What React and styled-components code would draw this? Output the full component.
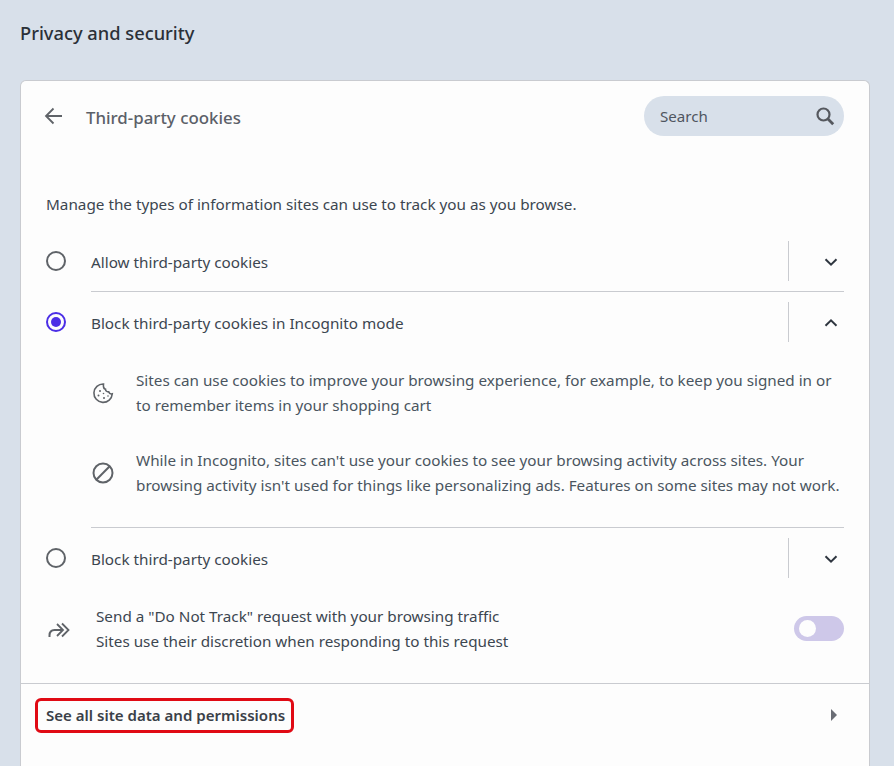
import React from 'react'
import styled, { createGlobalStyle } from 'styled-components'

const Global = createGlobalStyle`
  html, body {
    margin: 0;
    height: 766px;
    overflow: hidden;
    background: #d8e0ea;
    font-family: "Noto Sans", "Open Sans", sans-serif;
  }
`

const Page = styled.div`
  padding: 0 24px 0 20px;
`

const PageTitle = styled.h1`
  margin: 0;
  height: 80px;
  padding-top: 21px;
  box-sizing: border-box;
  font-size: 18.3px;
  line-height: 24px;
  font-weight: 500;
  color: #2b3038;
`

const Card = styled.section`
  background: #fdfdfd;
  border: 1px solid #c9cbd0;
  border-bottom: 0;
  border-radius: 6px 6px 0 0;
  height: 700px;
`

const Header = styled.header`
  display: flex;
  align-items: center;
  height: 40px;
  padding: 15px 25px 0 23px;
`

const BackIcon = styled.svg`
  width: 20px;
  height: 20px;
  margin-right: 22px;
  color: #5f6368;
`

const HeaderTitle = styled.h2`
  flex: 1;
  margin: 0;
  padding-top: 2px;
  font-size: 16.85px;
  font-weight: 500;
  color: #5b6068;
`

const SearchBox = styled.div`
  display: flex;
  align-items: center;
  justify-content: space-between;
  width: 200px;
  height: 40px;
  box-sizing: border-box;
  padding: 0 9px 0 16px;
  border-radius: 20px;
  background: #d8e0ea;
  font-size: 15.1px;
  color: #4f5660;
`

const Intro = styled.p`
  margin: 0;
  padding: 58px 0 0 25px;
  height: 20px;
  line-height: 20px;
  font-size: 15.28px;
  color: #3c4650;
`

const Options = styled.div`
  margin-top: 17px;
  padding: 0 25px;
`

const OptionRow = styled.div`
  display: flex;
  align-items: center;
  height: 60px;
`

const Radio = styled.span`
  flex: none;
  width: 20px;
  height: 20px;
  box-sizing: border-box;
  margin-right: 25px;
  border-radius: 50%;
  border: 2px solid ${p => (p.$checked ? '#4b2ee6' : '#5f6368')};
  display: flex;
  align-items: center;
  justify-content: center;
  &::after {
    content: '';
    display: ${p => (p.$checked ? 'block' : 'none')};
    width: 10px;
    height: 10px;
    border-radius: 50%;
    background: #4b2ee6;
  }
`

const OptionLabel = styled.span`
  flex: 1;
  padding-top: 2px;
  font-size: 15.28px;
  color: #3c4650;
`

const ExpandCell = styled.div`
  width: 56px;
  height: 40px;
  border-left: 1px solid #c9cbd0;
  display: flex;
  align-items: center;
  justify-content: flex-end;
  padding-right: 5px;
  box-sizing: border-box;
`

const Chevron = styled.svg`
  width: 16px;
  height: 16px;
  margin-top: 2px;
  color: #2f3640;
  transform: ${p => (p.$up ? 'rotate(180deg)' : 'none')};
`

const Rule = styled.div`
  height: 1px;
  margin-left: 45px;
  background: #c9cbd0;
`

const Details = styled.div`
  margin-left: 45px;
  padding-top: 16px;
  height: 175px;
  box-sizing: border-box;
`

const DetailRow = styled.div`
  display: flex;
  align-items: center;
  margin-bottom: 30px;
`

const DetailIcon = styled.svg`
  flex: none;
  width: 24px;
  height: 24px;
  margin-right: 21px;
  color: #5f6368;
`

const DetailText = styled.p`
  margin: 0;
  font-size: 15.25px;
  line-height: 25px;
  color: #4a5560;
  white-space: nowrap;
`

const TrackRow = styled.div`
  display: flex;
  align-items: center;
  height: 81px;
  padding: 0 25px 14px 25px;
  border-bottom: 1px solid #c9cbd0;
`

const TrackIcon = styled.svg`
  flex: none;
  width: 24px;
  height: 24px;
  margin-right: 26px;
  color: #5f6368;
`

const TrackText = styled.div`
  flex: 1;
  font-size: 15.25px;
  line-height: 25px;
  color: #3c4650;
`

const Toggle = styled.div`
  display: flex;
  align-items: center;
  width: 50px;
  height: 25px;
  box-sizing: border-box;
  padding-left: 5px;
  border-radius: 13px;
  background: #cec8e9;
  &::before {
    content: '';
    width: 17px;
    height: 17px;
    border-radius: 50%;
    background: #fdfdfd;
  }
`

const LinkRow = styled.div`
  display: flex;
  align-items: flex-start;
  justify-content: space-between;
  padding: 14px 32px 0 14px;
`

const HighlightLink = styled.a`
  display: block;
  width: 259px;
  height: 35px;
  box-sizing: border-box;
  padding-left: 8px;
  border: 3px solid #e00a14;
  border-radius: 6px;
  font-size: 15.05px;
  line-height: 29px;
  font-weight: 600;
  color: #3a4048;
  white-space: nowrap;
`

const Caret = styled.svg`
  width: 6px;
  height: 12px;
  margin-top: 11px;
  color: #6a6d75;
`

const ChevronDown = ({ up }) => (
  <Chevron $up={up} viewBox="0 0 16 16" fill="none" stroke="currentColor" strokeWidth="2">
    <path d="M2.5 5.2 8 10.6l5.5-5.4" />
  </Chevron>
)

export default function App() {
  return (
    <Page>
      <Global />
      <PageTitle>Privacy and security</PageTitle>
      <Card>
        <Header>
          <BackIcon viewBox="0 0 20 20" fill="none" stroke="currentColor" strokeWidth="1.8">
            <path d="M18 10H2.500M9.500 2.500 2 10l7.500 7.500" />
          </BackIcon>
          <HeaderTitle>Third-party cookies</HeaderTitle>
          <SearchBox>
            Search
            <svg width="20" height="20" viewBox="0 0 20 20" fill="none" stroke="#55585e" strokeWidth="2.2">
              <circle cx="8.500" cy="8.500" r="6" />
              <path d="m13 13 5.200 5.200" strokeWidth="2.800" />
            </svg>
          </SearchBox>
        </Header>
        <Intro>Manage the types of information sites can use to track you as you browse.</Intro>
        <Options>
          <OptionRow>
            <Radio />
            <OptionLabel>Allow third-party cookies</OptionLabel>
            <ExpandCell><ChevronDown /></ExpandCell>
          </OptionRow>
          <Rule />
          <OptionRow>
            <Radio $checked />
            <OptionLabel>Block third-party cookies in Incognito mode</OptionLabel>
            <ExpandCell><ChevronDown up /></ExpandCell>
          </OptionRow>
          <Details>
            <DetailRow>
              <DetailIcon viewBox="0 0 24 24" fill="none" stroke="currentColor" strokeWidth="1.6">
                <path d="M12.500 3a9.200 9.200 0 1 0 8.800 9.800c-1.600.4-3.100-.4-3.600-2-1.700.3-3.200-.9-3.200-2.600-1.600-.4-2.400-2.200-2-5.200Z" />
                <g fill="currentColor" stroke="none">
                  <circle cx="9" cy="10" r="1" />
                  <circle cx="7.500" cy="14.500" r="1" />
                  <circle cx="13" cy="17" r="1" />
                  <circle cx="12.500" cy="12.500" r=".8" />
                  <circle cx="17" cy="15" r=".8" />
                </g>
              </DetailIcon>
              <DetailText>
                Sites can use cookies to improve your browsing experience, for example, to keep you signed in or<br />
                to remember items in your shopping cart
              </DetailText>
            </DetailRow>
            <DetailRow>
              <DetailIcon viewBox="0 0 24 24" fill="none" stroke="currentColor" strokeWidth="2">
                <circle cx="12" cy="12" r="9.500" />
                <path d="M18.700 5.300 5.300 18.700" />
              </DetailIcon>
              <DetailText>
                While in Incognito, sites can't use your cookies to see your browsing activity across sites. Your<br />
                browsing activity isn't used for things like personalizing ads. Features on some sites may not work.
              </DetailText>
            </DetailRow>
          </Details>
          <Rule />
          <OptionRow>
            <Radio />
            <OptionLabel>Block third-party cookies</OptionLabel>
            <ExpandCell><ChevronDown /></ExpandCell>
          </OptionRow>
        </Options>
        <TrackRow>
          <TrackIcon viewBox="0 0 24 24" fill="none" stroke="currentColor" strokeWidth="2">
            <path d="M3.500 20v-1.500c0-3.500 2-5.500 5-5.500H17" />
            <path d="M11 7l6 6-6 6M16 6.500l6.500 6.500-6.500 6.500" strokeWidth="1.800" />
          </TrackIcon>
          <TrackText>
            Send a "Do Not Track" request with your browsing traffic<br />
            Sites use their discretion when responding to this request
          </TrackText>
          <Toggle />
        </TrackRow>
        <LinkRow>
          <HighlightLink>See all site data and permissions</HighlightLink>
          <Caret viewBox="0 0 6 12" fill="currentColor"><path d="M0 0l6 6-6 6Z" /></Caret>
        </LinkRow>
      </Card>
    </Page>
  )
}
